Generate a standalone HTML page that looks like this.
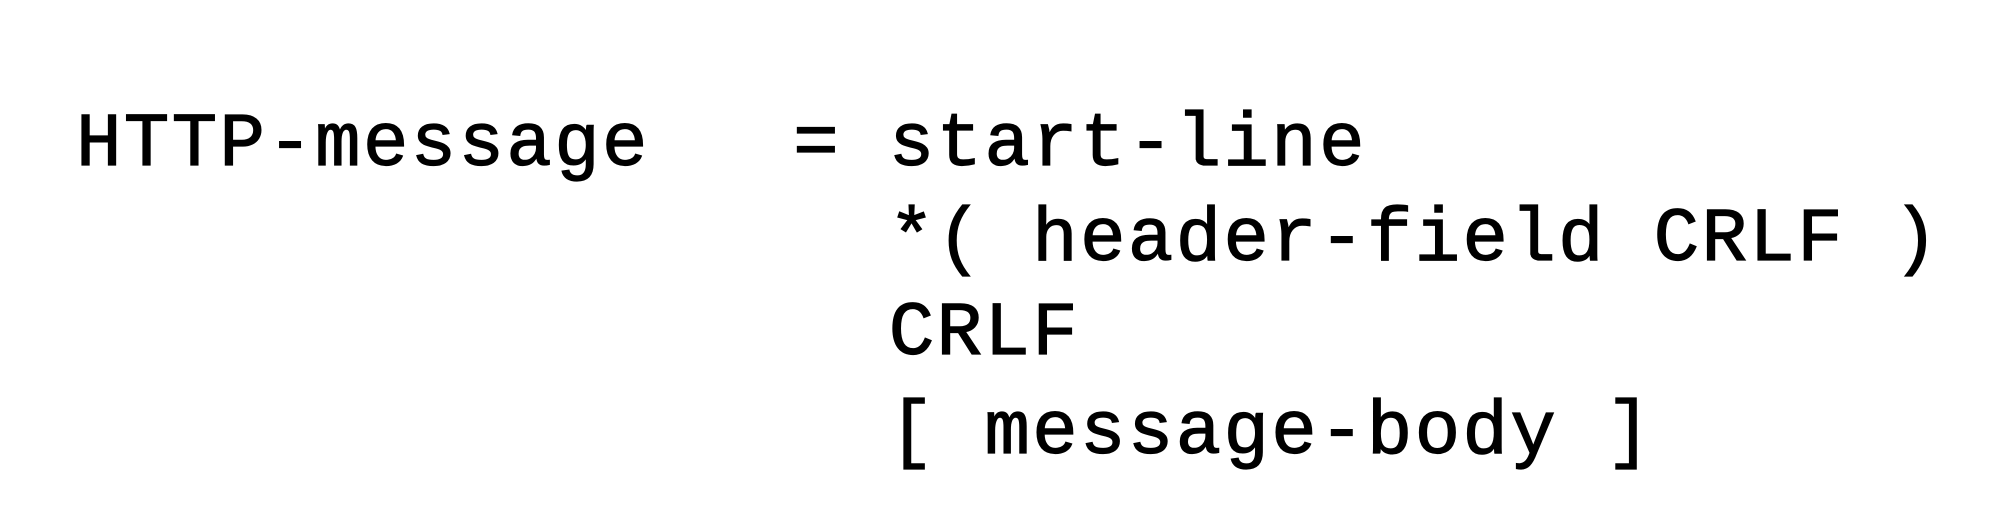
<!DOCTYPE html>
<html><head><meta charset="utf-8"><style>
html,body{margin:0;padding:0;background:#fff;width:2000px;height:526px;overflow:hidden}
.l{position:absolute;left:76px;font-family:"Liberation Mono","DejaVu Sans Mono",monospace;font-size:76px;letter-spacing:2.2px;line-height:96px;white-space:pre;color:#000;-webkit-text-stroke:1.2px #000}
</style></head><body>
<div class="l" style="top:97px">HTTP-message   = start-line</div>
<div class="l" style="top:192px">                 *( header-field CRLF )</div>
<div class="l" style="top:286px">                 CRLF</div>
<div class="l" style="top:385px">                 [ message-body ]</div>
</body></html>
